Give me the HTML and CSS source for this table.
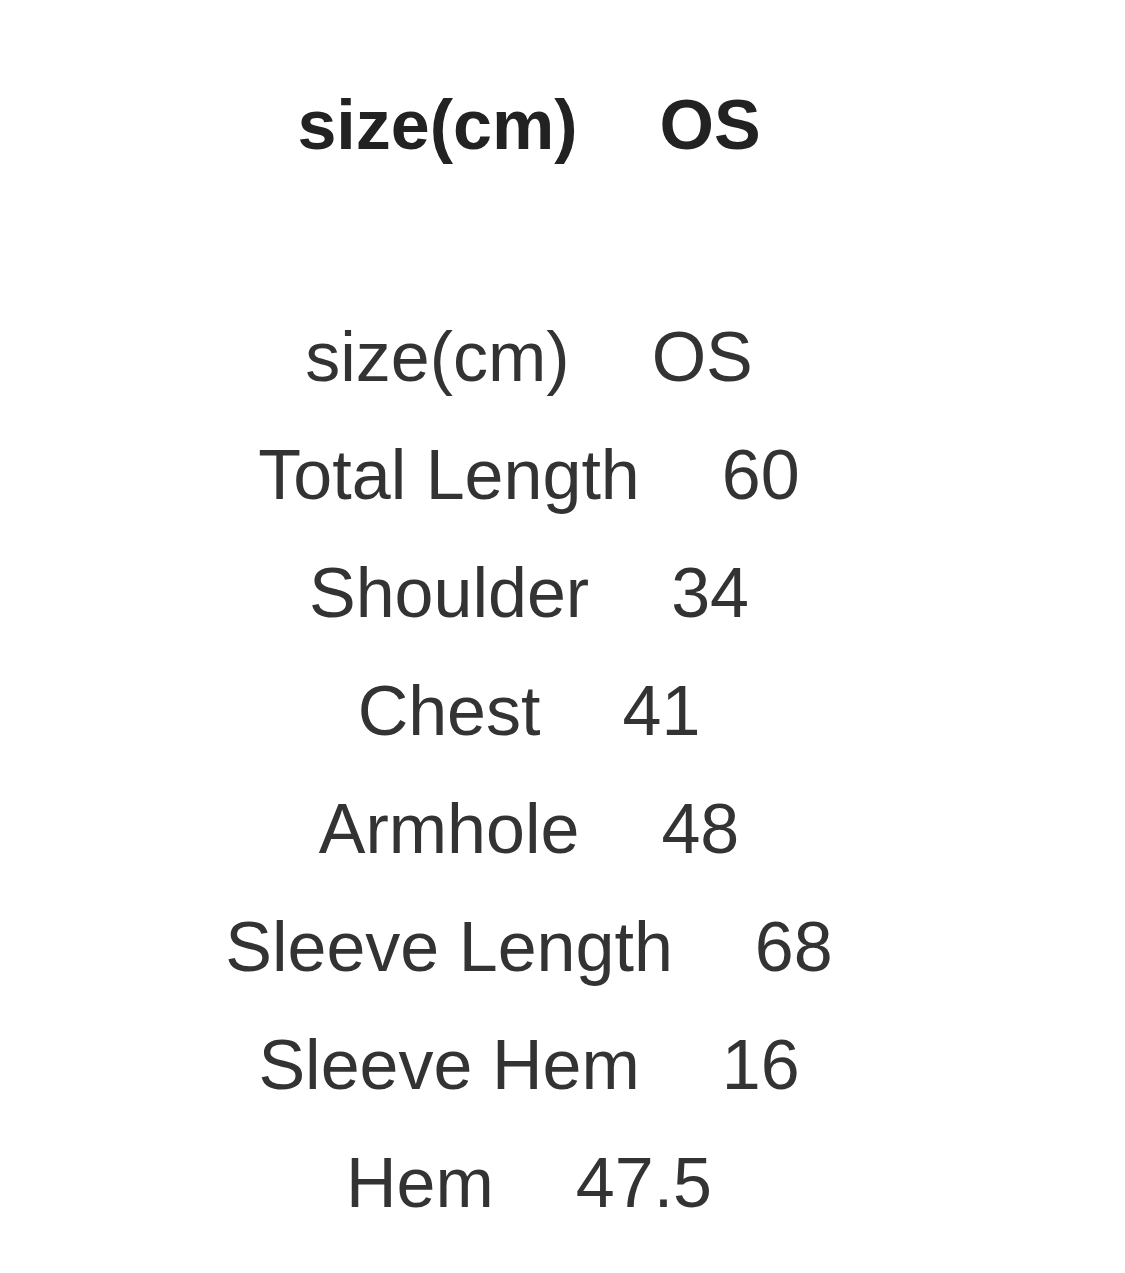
FILE: index.html
```html
<!DOCTYPE html>
<html lang="en">
<head>
<meta charset="utf-8">
<title>Size chart</title>
<link rel="stylesheet" href="styles.css">
</head>
<body>
<div class="sheet">
  <div class="row head"><span>size(cm)</span><span>OS</span></div>
  <div class="rows">
    <div class="row"><span>size(cm)</span><span>OS</span></div>
    <div class="row"><span>Total Length</span><span>60</span></div>
    <div class="row"><span>Shoulder</span><span>34</span></div>
    <div class="row"><span>Chest</span><span>41</span></div>
    <div class="row"><span>Armhole</span><span>48</span></div>
    <div class="row"><span>Sleeve Length</span><span>68</span></div>
    <div class="row"><span>Sleeve Hem</span><span>16</span></div>
    <div class="row"><span>Hem</span><span>47.5</span></div>
  </div>
</div>
</body>
</html>
```

FILE: styles.css
```css
html, body {
  margin: 0;
  padding: 0;
  background: #ffffff;
}
body {
  font-family: "Liberation Sans", Arial, sans-serif;
  color: #333333;
}
.sheet {
  width: 1058px;
  padding-top: 66px;
}
.row {
  display: flex;
  justify-content: center;
  gap: 82px;
  font-size: 70px;
  line-height: 118px;
  white-space: nowrap;
}
.head {
  font-weight: bold;
  color: #222222;
  margin-bottom: 114px;
}
```
